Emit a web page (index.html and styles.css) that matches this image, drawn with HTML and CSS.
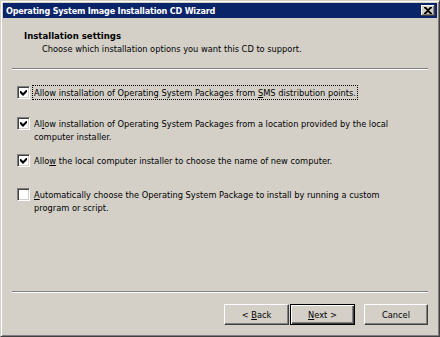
FILE: index.html
```html
<!DOCTYPE html>
<html lang="en">
<head>
    <meta charset="UTF-8">
    <title>Operating System Image Installation CD Wizard</title>
    <link rel="stylesheet" href="styles.css">
</head>
<body>

    <div class="window">

        <!-- Title bar -->
        <div class="titlebar">
            <span class="title">Operating System Image Installation CD Wizard</span>
            <span class="close">
                <svg width="8" height="7" viewBox="0 0 8 7">
                    <path d="M0 0h2l2 2 2-2h2v1L5 3.5 8 6v1H6L4 5 2 7H0V6l3-2.5L0 1z" fill="#000"/>
                </svg>
            </span>
        </div>

        <!-- Header -->
        <div class="header">
            <div class="header-title">Installation settings</div>
            <div class="header-sub">Choose which installation options you want this CD to support.</div>
        </div>
        <div class="rule"></div>

        <!-- Options -->
        <div class="options">
            <div class="option opt-1">
                <span class="check"><svg width="7" height="7" viewBox="0 0 7 7"><path d="M0 2h1l2 2 3-3 1 0v2L3 7 0 4z" fill="#000"/></svg></span>
                <span class="label focus">Allow installation of Operating System Packages from <u>S</u>MS distribution points.</span>
            </div>
            <div class="option opt-2">
                <span class="check"><svg width="7" height="7" viewBox="0 0 7 7"><path d="M0 2h1l2 2 3-3 1 0v2L3 7 0 4z" fill="#000"/></svg></span>
                <span class="label">Al<u>l</u>ow installation of Operating System Packages from a location provided by the local computer installer.</span>
            </div>
            <div class="option opt-3">
                <span class="check"><svg width="7" height="7" viewBox="0 0 7 7"><path d="M0 2h1l2 2 3-3 1 0v2L3 7 0 4z" fill="#000"/></svg></span>
                <span class="label">Allo<u>w</u> the local computer installer to choose the name of new computer.</span>
            </div>
            <div class="option opt-4">
                <span class="check"></span>
                <span class="label"><u>A</u>utomatically choose the Operating System Package to install by running a custom program or script.</span>
            </div>
        </div>

        <div class="rule"></div>

        <!-- Buttons -->
        <div class="buttons">
            <button class="btn">&lt; <u>B</u>ack</button>
            <button class="btn default"><u>N</u>ext &gt;</button>
            <button class="btn cancel">Cancel</button>
        </div>

    </div>

</body>
</html>
```

FILE: styles.css
```css
/* General styles */
body {
    margin: 0;
    padding: 0;
    background-color: #d4d0c8;
    font-family: 'DejaVu Sans Condensed', 'DejaVu Sans', sans-serif;
    font-size: 9.2px;
    color: #000;
}

/* Window frame */
.window {
    width: 440px;
    height: 337px;
    box-sizing: border-box;
    padding: 2px;
    background-color: #d4d0c8;
    border-top: 1px solid #d4d0c8;
    border-left: 1px solid #d4d0c8;
    border-right: 1px solid #404040;
    border-bottom: 1px solid #404040;
    box-shadow: inset 1px 1px 0 #fff, inset -1px -1px 0 #808080;
    display: flex;
    flex-direction: column;
}

/* Title bar */
.titlebar {
    height: 15px;
    background-color: #0a246a;
    display: flex;
    align-items: center;
    justify-content: space-between;
    padding: 0 2px 0 3px;
}
.title {
    color: #fff;
    font-weight: bold;
    font-size: 9px;
    letter-spacing: -0.2px;
}
.close {
    width: 14px;
    height: 11px;
    background-color: #d4d0c8;
    box-shadow: inset -1px -1px 0 #404040, inset 1px 1px 0 #fff, inset -2px -2px 0 #808080;
    display: flex;
    align-items: center;
    justify-content: center;
}

/* Header */
.header {
    height: 50px;
    padding: 11px 0 0 21px;
    box-sizing: border-box;
}
.header-title {
    font-weight: bold;
    font-size: 9.5px;
    line-height: 13px;
}
.header-sub {
    line-height: 13px;
    padding-left: 18px;
}

.rule {
    height: 1px;
    margin: 0 9px;
    background-color: #808080;
    border-bottom: 1px solid #fff;
}

/* Options */
.options {
    flex: 1;
    padding: 0 0 0 14px;
}
.option {
    display: flex;
    align-items: flex-start;
    line-height: 13px;
}
.opt-1 { margin-top: 16px; }
.opt-2 { margin-top: 18px; }
.opt-3 { margin-top: 11px; }
.opt-4 { margin-top: 21px; }

.check {
    width: 13px;
    height: 13px;
    flex: none;
    box-sizing: border-box;
    background-color: #fff;
    border-top: 1px solid #808080;
    border-left: 1px solid #808080;
    border-right: 1px solid #fff;
    border-bottom: 1px solid #fff;
    box-shadow: inset 1px 1px 0 #404040, inset -1px -1px 0 #d4d0c8;
    display: flex;
    align-items: center;
    justify-content: center;
}
.label {
    margin-left: 3px;
    padding: 0 1px;
    width: 370px;
}
.label.focus {
    width: auto;
    outline: 1px dotted #000;
}

/* Buttons */
.buttons {
    height: 41px;
    display: flex;
    justify-content: flex-end;
    align-items: flex-start;
    padding: 11px 9px 0 0;
    box-sizing: border-box;
}
.btn {
    width: 65px;
    height: 21px;
    margin-left: 1px;
    font-family: inherit;
    font-size: 9.2px;
    color: #000;
    background-color: #d4d0c8;
    border: 1px solid;
    border-color: #fff #404040 #404040 #fff;
    box-shadow: inset -1px -1px 0 #808080;
    padding: 0;
}
.btn.default {
    border: 1px solid #000;
    box-shadow: inset 1px 1px 0 #fff, inset -1px -1px 0 #404040, inset -2px -2px 0 #808080;
}
.btn.cancel {
    width: 64px;
    margin-left: 9px;
}
```
